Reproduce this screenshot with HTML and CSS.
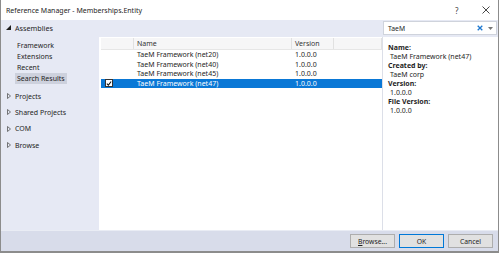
FILE: index.html
```html
<!DOCTYPE html>
<html>
<head>
<meta charset="utf-8">
<link rel="stylesheet" href="styles.css">
</head>
<body>
<div class="window">
  <div class="titlebar">
    <span class="title">Reference Manager - Memberships.Entity</span>
    <span class="tb-help">?</span>
    <span class="tb-close">
      <svg width="8" height="8" viewBox="0 0 8 8"><path d="M0.5 0.5L7.5 7.5M7.5 0.5L0.5 7.5" stroke="#333" stroke-width="0.9" fill="none"/></svg>
    </span>
  </div>
  <div class="strip">
    <div class="strip-left">
      <svg class="tri-open" width="5" height="5" viewBox="0 0 5 5"><path d="M5 0L5 5L0 5Z" fill="#1e1e1e"/></svg>
      <span>Assemblies</span>
    </div>
    <div class="search">
      <span class="search-text">TaeM</span>
      <svg class="search-x" width="6" height="6" viewBox="0 0 6 6"><path d="M0.7 0.7L5.3 5.3M5.3 0.7L0.7 5.3" stroke="#1e78d0" stroke-width="1.3" fill="none"/></svg>
      <svg class="search-dd" width="5" height="3" viewBox="0 0 5 3"><path d="M0 0L5 0L2.5 3Z" fill="#777"/></svg>
    </div>
  </div>
  <div class="main">
    <div class="nav">
      <div class="nav-group">
        <div class="nav-item">Framework</div>
        <div class="nav-item">Extensions</div>
        <div class="nav-item">Recent</div>
        <div class="nav-item"><span class="nav-sel">Search Results</span></div>
      </div>
      <div class="nav-head"><svg width="4" height="6" viewBox="0 0 4 6"><path d="M0.5 0.5L3.5 3L0.5 5.5Z" fill="none" stroke="#555" stroke-width="0.8"/></svg><span>Projects</span></div>
      <div class="nav-head"><svg width="4" height="6" viewBox="0 0 4 6"><path d="M0.5 0.5L3.5 3L0.5 5.5Z" fill="none" stroke="#555" stroke-width="0.8"/></svg><span>Shared Projects</span></div>
      <div class="nav-head"><svg width="4" height="6" viewBox="0 0 4 6"><path d="M0.5 0.5L3.5 3L0.5 5.5Z" fill="none" stroke="#555" stroke-width="0.8"/></svg><span>COM</span></div>
      <div class="nav-head"><svg width="4" height="6" viewBox="0 0 4 6"><path d="M0.5 0.5L3.5 3L0.5 5.5Z" fill="none" stroke="#555" stroke-width="0.8"/></svg><span>Browse</span></div>
    </div>
    <div class="list">
      <div class="row head">
        <div class="c-chk"></div>
        <div class="c-name">Name</div>
        <div class="c-ver">Version</div>
        <div class="c-rest"></div>
      </div>
      <div class="row">
        <div class="c-chk"></div>
        <div class="c-name">TaeM Framework (net20)</div>
        <div class="c-ver">1.0.0.0</div>
        <div class="c-rest"></div>
      </div>
      <div class="row">
        <div class="c-chk"></div>
        <div class="c-name">TaeM Framework (net40)</div>
        <div class="c-ver">1.0.0.0</div>
        <div class="c-rest"></div>
      </div>
      <div class="row">
        <div class="c-chk"></div>
        <div class="c-name">TaeM Framework (net45)</div>
        <div class="c-ver">1.0.0.0</div>
        <div class="c-rest"></div>
      </div>
      <div class="row selected">
        <div class="c-chk"><span class="checkbox"><svg width="7" height="7" viewBox="0 0 7 7"><path d="M1 3.6L2.8 5.4L6 1.2" stroke="#111" stroke-width="1.2" fill="none"/></svg></span></div>
        <div class="c-name">TaeM Framework (net47)</div>
        <div class="c-ver">1.0.0.0</div>
        <div class="c-rest"></div>
      </div>
    </div>
    <div class="details">
      <div class="d-label">Name:</div>
      <div class="d-value">TaeM Framework (net47)</div>
      <div class="d-label">Created by:</div>
      <div class="d-value">TaeM corp</div>
      <div class="d-label">Version:</div>
      <div class="d-value">1.0.0.0</div>
      <div class="d-label">File Version:</div>
      <div class="d-value">1.0.0.0</div>
    </div>
  </div>
  <div class="footer">
    <button class="btn btn-browse"><u>B</u>rowse...</button>
    <button class="btn btn-ok">OK</button>
    <button class="btn">Cancel</button>
  </div>
</div>
</body>
</html>
```

FILE: styles.css
```css
* { box-sizing: border-box; }
html, body { margin: 0; padding: 0; background: #fff; }
body {
  font-family: "Noto Sans", "Open Sans", sans-serif;
  font-size: 7px;
  color: #1e1e1e;
  width: 500px;
  height: 253px;
  overflow: hidden;
}
.window {
  width: 499px;
  height: 253px;
  border-left: 1px solid #8c8c8c;
  border-right: 1px solid #8c8c8c;
  border-bottom: 2px solid #8c8c8c;
  display: flex;
  flex-direction: column;
  background: #fff;
}
.titlebar {
  height: 20px;
  display: flex;
  align-items: center;
  padding-left: 5px;
  flex: none;
}
.title { flex: 1; font-size: 7px; color: #1e1e1e; }
.tb-help { width: 10px; font-size: 8px; color: #444; margin-right: 17px; }
.tb-close { width: 8px; margin-right: 8px; display: flex; }

.strip {
  height: 17px;
  flex: none;
  background: #e6e9f4;
  display: flex;
  align-items: flex-start;
  justify-content: space-between;
}
.strip-left { display: flex; align-items: center; height: 15px; padding-left: 5px; gap: 4px; font-size: 7.2px; }
.search {
  width: 114px;
  height: 14px;
  margin-top: 1px;
  margin-right: 1px;
  background: #fff;
  border: 1px solid #cfd3dc;
  display: flex;
  align-items: center;
  padding-left: 4px;
  padding-right: 3px;
}
.search-text { flex: 1; font-size: 6.8px; }
.search-x { margin-right: 5px; }

.main {
  flex: 1;
  display: flex;
  min-height: 0;
}
.nav {
  width: 98px;
  background: #e6e9f4;
  flex: none;
  padding-top: 3px;
}
.nav-group { padding-left: 16px; margin-bottom: 4px; }
.nav-item { height: 11px; display: flex; align-items: center; }
.nav-sel { background: #cdd1dd; padding: 1px 2px; margin-left: -2px; }
.nav-head {
  height: 16.3px;
  display: flex;
  align-items: center;
  padding-left: 6px;
  gap: 4px;
}

.list {
  flex: 1;
  background: #fff;
  padding-left: 2px;
  padding-top: 1px;
}
.row {
  display: flex;
  height: 9.5px;
  align-items: center;
}
.row.head {
  height: 12px;
  background: #f6f6f7;
  border-bottom: 1px solid #e6e6e6;
  color: #333;
}
.row.head > div { border-right: 1px solid #e1e1e1; height: 100%; display: flex; align-items: center; }
.c-chk { width: 33px; flex: none; display: flex; align-items: center; padding-left: 4px; }
.c-name { width: 158px; flex: none; padding-left: 3px; white-space: nowrap; }
.c-ver { width: 42px; flex: none; padding-left: 3px; }
.c-rest { flex: 1; }
.row.selected { background: #0a78d6; color: #fff; }
.checkbox {
  width: 8px; height: 8px;
  background: #fff;
  border: 1px solid #333;
  display: flex; align-items: center; justify-content: center;
}

.details {
  width: 116px;
  flex: none;
  background: #fff;
  border-left: 1px solid #dcdfe8;
  padding-top: 6px;
  padding-left: 5px;
}
.d-label { font-weight: bold; height: 9px; line-height: 9px; }
.d-value { height: 9px; line-height: 9px; padding-left: 2px; }

.footer {
  height: 21px;
  flex: none;
  background: #d8dcea;
  border-top: 1px solid #e9ecf4;
  display: flex;
  align-items: center;
  justify-content: flex-end;
  gap: 4px;
  padding-right: 5px;
}
.btn {
  width: 45px;
  height: 14px;
  font-family: inherit;
  font-size: 6.8px;
  color: #1e1e1e;
  background: #e1e1e1;
  border: 1px solid #adadad;
  padding: 0;
  margin: 0;
}
.btn-ok { border-color: #0078d7; }
.btn-browse u { text-decoration: underline; }
```
